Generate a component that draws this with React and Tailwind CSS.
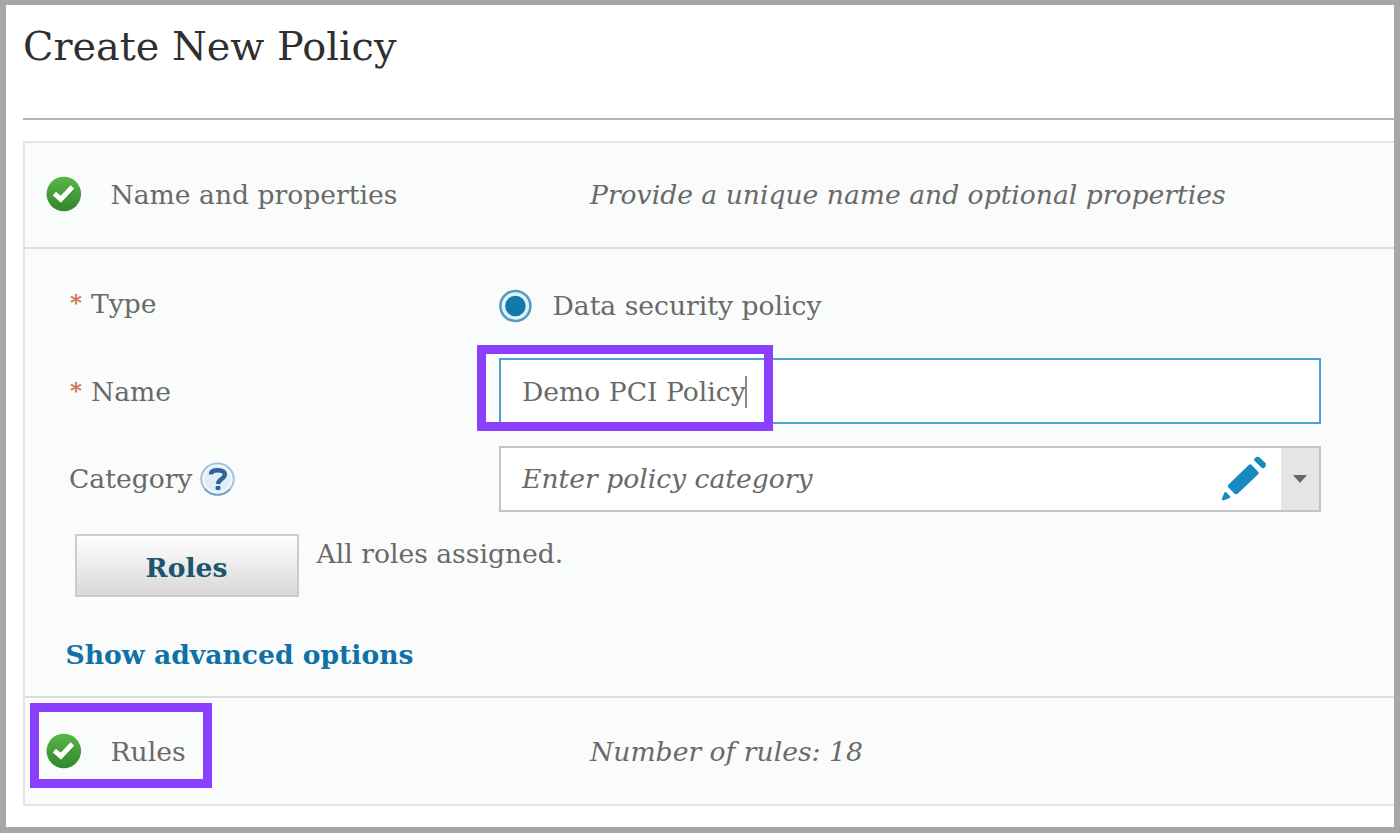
import React from "react";

function CheckIcon() {
  return (
    <svg className="block h-9 w-9 shrink-0" viewBox="0 0 36 36">
      <defs>
        <linearGradient id="ok" x1="0" y1="0" x2="0" y2="1">
          <stop offset="0" stopColor="#5bb646" />
          <stop offset="1" stopColor="#30862d" />
        </linearGradient>
      </defs>
      <circle cx="17.8" cy="18" r="17.3" fill="url(#ok)" />
      <path d="M9 19 L14.6 24.6 L27.2 12.4" fill="none" stroke="#2c7f2a" strokeOpacity="0.45" strokeWidth="5.4" />
      <path d="M8.4 17.6 L14.8 23.2 L26.4 11" fill="none" stroke="#fff" strokeWidth="5" />
    </svg>
  );
}

function HelpIcon() {
  return (
    <svg className="block h-[34px] w-9 shrink-0" viewBox="0 0 36 34">
      <ellipse cx="17.5" cy="17" rx="16.2" ry="15.6" fill="#e1eef8" stroke="#a3bfd9" strokeWidth="2" />
      <path d="M5 27 A16.2 15.6 0 0 0 30 27" fill="none" stroke="#7f9fc2" strokeWidth="2" />
      <ellipse cx="17.5" cy="17" rx="14.2" ry="13.6" fill="none" stroke="#f3f9fe" strokeWidth="1.6" />
      <path d="M11 12.6 C11 9 14.2 8.2 17.6 8.2 C22.4 8.2 24.8 10 24.8 12.8 C24.8 17 18.4 16.8 18 22" fill="none" stroke="#2d6497" strokeWidth="4.4" />
      <rect x="15.6" y="24" width="4.8" height="4" rx="1" fill="#2d6497" />
    </svg>
  );
}

function PencilIcon() {
  return (
    <svg className="block h-[46px] w-[46px] shrink-0" viewBox="0 0 46 46" fill="#178bc1">
      <path d="M33 3 Q35.5 0 38 1 L45 7.6 Q45.6 9.4 43 12.2 Q41.6 12.6 40.4 11.4 L33.4 4.8 Z" />
      <path d="M30 8.2 L37.8 16.4 L37.4 18 L16.4 38 Q14.6 38.6 13.4 37.6 L7 31 Q6.4 29.6 7.6 28.4 L28 8.8 Z" />
      <path d="M3.4 36.6 L5 36 L9.4 40.4 L8.6 42 L2.4 44.4 L0.6 43.4 Z" />
    </svg>
  );
}

function SectionHeader({ title, note }) {
  return (
    <>
      <CheckIcon />
      <span className="mt-0.5 ml-[28.5px] w-[479.5px]">{title}</span>
      <span className="mt-0.5 italic">{note}</span>
    </>
  );
}

function Required() {
  return <span className="w-[22px] pl-px text-[23px] leading-[27px] font-bold text-[#d07450]">*</span>;
}

export default function App() {
  return (
    <div className="h-[833px] w-[1400px] overflow-hidden border-[6px] border-t-[5px] border-[#a8a7a5] bg-white pl-[17px] font-['DejaVu_Serif',serif] text-[26.6px] leading-8 whitespace-nowrap text-[#696969]">
      <header className="h-[115px] border-b-2 border-[#b3b4b3] pt-[18px]">
        <h1 className="text-[39.8px] leading-[46px] text-[#2f2f2f]">Create New Policy</h1>
      </header>

      <main className="mt-[21px] border-2 border-r-0 border-[#e3e4e4] bg-[#fafbfb]">
        <section className="flex h-[104px] items-center pb-0.5 pl-[21px]">
          <SectionHeader title="Name and properties" note="Provide a unique name and optional properties" />
        </section>

        <section className="h-[451px] border-y-2 border-[#dcdddd]">
          <div className="flex h-[109px] items-center pl-11">
            <div className="flex w-[430px]"><Required />Type</div>
            <svg className="mt-1 h-[34px] w-[34px]" viewBox="0 0 34 34">
              <circle cx="16.4" cy="17" r="15" fill="#e2f1f8" stroke="#5b9aba" strokeWidth="2.6" />
              <circle cx="16.4" cy="17" r="10.3" fill="#107aad" />
            </svg>
            <span className="mt-1 ml-[19.5px]">Data security policy</span>
          </div>

          <div className="relative flex h-[66px] items-center pl-11">
            <div className="mt-0.5 flex w-[430px]"><Required />Name</div>
            <div className="flex h-[66px] w-[822px] items-center border-2 border-[#48a4c9] bg-white pl-[21px]">
              <span className="mt-0.5">Demo PCI Policy</span>
              <span className="mt-0.5 -ml-px h-8 w-0.5 bg-[#888]" />
            </div>
            <div className="absolute top-[-13px] left-[452px] h-[86px] w-[296px] border-[9px] border-[#8a3ffc]" />
          </div>

          <div className="mt-[22px] flex h-[66px] items-center pl-11">
            <div className="flex w-[430px] items-center gap-2">Category<HelpIcon /></div>
            <div className="flex h-[66px] w-[822px] items-center border-2 border-[#c3c4c4] bg-white pl-[21px]">
              <span className="grow italic">Enter policy category</span>
              <PencilIcon />
              <div className="ml-[14px] flex h-full w-[38px] items-center justify-center bg-[#e5e5e5]">
                <svg className="h-2 w-[14px]" viewBox="0 0 14 8"><path d="M0 0H14L7 8Z" fill="#666" /></svg>
              </div>
            </div>
          </div>

          <div className="mt-[22px] flex pl-[49.5px]">
            <button className="h-[63px] w-[224px] border-2 border-[#cbcccc] bg-linear-to-b from-white to-[#d8d8d8] pt-1 font-bold text-[#1c566e]">Roles</button>
            <span className="mt-1 ml-[18px]">All roles assigned.</span>
          </div>

          <a className="mt-[42px] ml-[40.5px] block font-bold text-[#0f71a6]">Show advanced options</a>
        </section>

        <section className="relative flex h-[106px] items-center pl-[21px]">
          <SectionHeader title="Rules" note="Number of rules: 18" />
          <div className="absolute top-[5px] left-[5px] h-[85px] w-[182px] border-[9px] border-[#8a3ffc]" />
        </section>
      </main>
    </div>
  );
}
